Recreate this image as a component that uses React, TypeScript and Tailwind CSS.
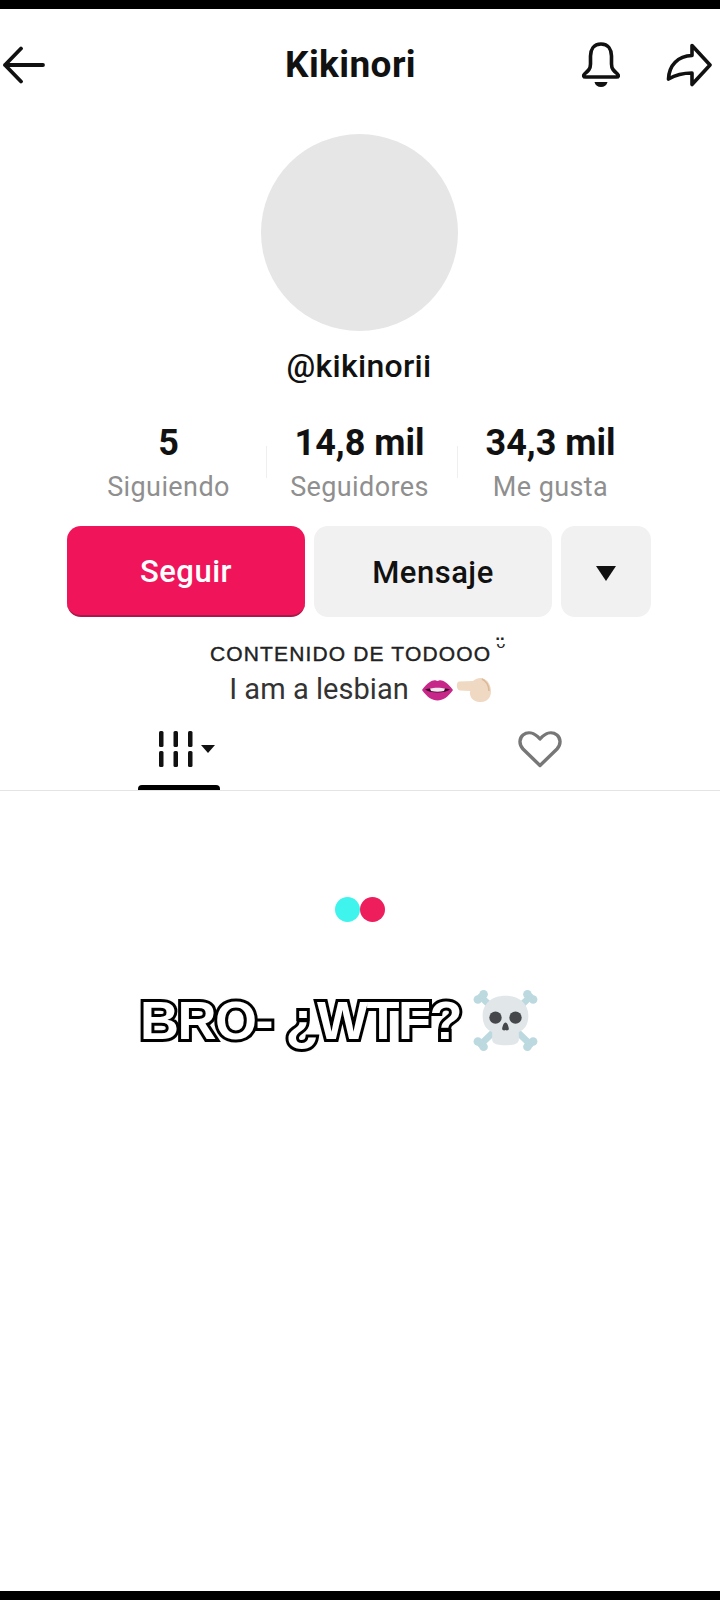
import { FC } from "react";

const font = { sans: "font-['Roboto',Arial,sans-serif]", wide: "font-['Liberation_Sans',Arial,sans-serif]" };

const stats = [
  { value: "5", label: "Siguiendo" },
  { value: "14,8 mil", label: "Seguidores" },
  { value: "34,3 mil", label: "Me gusta" },
];

const BackIcon: FC = () => (
  <svg width="44" height="38" viewBox="0 0 44 38" fill="none" stroke="#111" strokeWidth="3.8" strokeLinecap="round" strokeLinejoin="round">
    <path d="M41 19H3M19 2.500 3 19l16 16.500" />
  </svg>
);

const BellIcon: FC = () => (
  <svg width="42" height="46" viewBox="0 0 42 46" fill="none" stroke="#111" strokeWidth="3.6" strokeLinejoin="round">
    <path d="M21 2c-7.500 0-10.500 6-10.500 12v8c0 5-2.500 7-6 10-1.500 1.500-1 3 1 3h31c2 0 2.500-1.500 1-3-3.500-3-6-5-6-10v-8C31.500 8 28.500 2 21 2Z" />
    <path d="M14.500 40h13c-.8 3.500-3.200 5-6.500 5s-5.700-1.500-6.500-5Z" fill="#111" stroke="none" />
  </svg>
);

const ShareIcon: FC = () => (
  <svg width="46" height="44" viewBox="0 0 46 44" fill="none" stroke="#111" strokeWidth="3.6" strokeLinejoin="round" strokeLinecap="round">
    <path d="M26 2.500 44 22 26 41.500V30c-8 0-15 1-23.500 6C3 22 12 13 26 12.500V2.500Z" />
  </svg>
);

const Lips: FC = () => (
  <svg width="33" height="22" viewBox="0 0 33 22">
    <path d="M1 11C7 3 12 .5 15 1.500c1 .6 2 .6 3 0 3-1 8 1.500 14 9.500-5 7-10 10.500-15.500 10.500S6 18 1 11Z" fill="#c8278a" />
    <path d="M4 10.500c6-2 19-2 25 0-5 4-20 4-25 0Z" fill="#3d0a2a" />
    <path d="M9 9.500c4-1 11-1 15 0l-1 2.500c-4 1-9 1-13 0Z" fill="#f6e8f0" />
  </svg>
);

const PointingHand: FC = () => (
  <svg width="36" height="26" viewBox="0 0 36 26">
    <path d="M3 4.500 17 4C20 1.500 24 .5 27 1.500c5 1.500 8 6.500 8 13 0 6-4 10.500-10 10.500-5 0-9-2-10.500-6-.8-2-.8-3.500-.2-5L4 13.500C0 13 0 5 3 4.500Z" fill="#efd9c2" />
    <path d="M26 2c4 2 7 6 7 12" fill="none" stroke="#dcb998" strokeWidth="1.500" />
  </svg>
);

const Skull: FC = () => (
  <svg width="65" height="61" viewBox="0 0 68 64">
    <g stroke="#bcd9e0" strokeWidth="7" strokeLinecap="round">
      <path d="M8 7 60 57M60 7 8 57" />
    </g>
    <g fill="#bcd9e0">
      <circle cx="5" cy="10" r="4.500" /><circle cx="11" cy="4.500" r="4.500" />
      <circle cx="63" cy="10" r="4.500" /><circle cx="57" cy="4.500" r="4.500" />
      <circle cx="5" cy="54" r="4.500" /><circle cx="11" cy="59.500" r="4.500" />
      <circle cx="63" cy="54" r="4.500" /><circle cx="57" cy="59.500" r="4.500" />
    </g>
    <path d="M34 6c15 0 24 9 24 21 0 9-4 15-10 17v8c0 4-4 6-14 6s-14-2-14-6v-8c-6-2-10-8-10-17C10 15 19 6 34 6Z" fill="#e1e6e9" />
    <circle cx="23.500" cy="29" r="6.500" fill="#45474b" />
    <circle cx="44.500" cy="29" r="6.500" fill="#45474b" />
    <path d="M34 34c-2 0-3.500 5-3.500 7 0 1.500 2.500 2 3.500 1 1 1 3.500.5 3.500-1 0-2-1.500-7-3.500-7Z" fill="#45474b" />
  </svg>
);

export default function App() {
  return (
    <div className={`${font.sans} flex h-[1600px] w-[720px] flex-col bg-white text-[#111]`}>
      <div className="h-[9px] bg-black" />

      <div className="flex flex-1 flex-col">
        <div className="flex h-[112px] items-center">
          <div className="w-[285px] pl-[2px]">
            <BackIcon />
          </div>
          <h1 className="w-[295px] text-[37px] font-bold tracking-[0.4px]">Kikinori</h1>
          <BellIcon />
          <div className="ml-[44px]">
            <ShareIcon />
          </div>
        </div>

        <div className="mt-[13px] ml-[261px] h-[197px] w-[197px] rounded-full bg-[#e6e6e6]" />

        <p className="mt-[15px] ml-[-2px] text-center text-[32px] leading-[40px] font-medium tracking-[0.3px]">@kikinorii</p>

        <div className="mt-[38px] flex items-center justify-center pl-[3px]">
          {stats.map((s, i) => (
            <div key={s.label} className="flex items-center">
              {i > 0 && <div className="mb-[4px] h-[32px] w-px bg-[#efefef]" />}
              <div className="w-[190px] text-center last:pr-[4px]">
                <div className="text-[36px] leading-[38px] font-bold">{s.value}</div>
                <div className="mt-[9px] text-[27px] leading-[32px] tracking-[0.4px] text-[#8f8f8f]">{s.label}</div>
              </div>
            </div>
          ))}
        </div>

        <div className="mt-[23px] ml-[67px] flex h-[91px] items-stretch gap-[9px] text-[31px] font-medium tracking-[0.5px]">
          <button className="w-[238px] rounded-[14px] border-b-2 border-[#a8184a] bg-[#f0145a] pt-[3px] text-white">Seguir</button>
          <button className="w-[238px] rounded-[14px] bg-[#f1f1f1] pt-[3px]">Mensaje</button>
          <button className="flex w-[90px] items-center justify-center rounded-[14px] bg-[#f1f1f1] pt-[3px]">
            <svg width="22" height="17" viewBox="0 0 22 17">
              <path d="M1 1h20L11 16Z" fill="#111" />
            </svg>
          </button>
        </div>

        <div className="mt-[24px] flex items-start justify-center pr-[4px]">
          <p className={`${font.wide} text-[21px] leading-[26px] font-medium tracking-[1.15px] text-[#222] [-webkit-text-stroke:0.4px_#222]`}>CONTENIDO DE TODOOO</p>
          <span className="ml-[5px] font-['DejaVu_Sans',sans-serif] text-[24px] leading-[14px] text-[#222]">ᵕ̈</span>
        </div>

        <div className="mt-[5px] flex h-[36px] items-center justify-center pl-[1px]">
          <span className="text-[29px] tracking-[0.05px] text-[#333]">I am a lesbian</span>
          <span className="ml-[12px]"><Lips /></span>
          <span className="ml-[2px]"><PointingHand /></span>
        </div>

        <div className="mt-[17px] flex h-[66px] border-b border-[#e4e4e4]">
          <div className="ml-[138px] flex w-[82px] flex-col items-center">
            <div className="flex h-[60px] items-start pl-[15px] pt-[5px]">
              <svg width="58" height="38" viewBox="0 0 58 38" fill="#111">
                <rect x="1" y="1" width="4.500" height="16" rx="1.500" />
                <rect x="15.500" y="1" width="4.500" height="16" rx="1.500" />
                <rect x="30" y="1" width="4.500" height="16" rx="1.500" />
                <rect x="1" y="21" width="4.500" height="16" rx="1.500" />
                <rect x="15.500" y="21" width="4.500" height="16" rx="1.500" />
                <rect x="30" y="21" width="4.500" height="16" rx="1.500" />
                <path d="M43 15h14l-7 8Z" />
              </svg>
            </div>
            <div className="h-[5px] w-full rounded-t-[4px] bg-black" />
          </div>
          <div className="ml-[298px] pt-[5px]">
            <svg width="44" height="38" viewBox="0 0 44 38" fill="none" stroke="#777" strokeWidth="3.400" strokeLinejoin="round">
              <path d="M22 35.500 5 19C.5 14 1.500 8 5 5c4.500-3.500 11-3 17 4 6-7 12.500-7.500 17-4 3.500 3 4.500 9 0 14L22 35.500Z" />
            </svg>
          </div>
        </div>

        <div className="mt-[106px] flex justify-center pr-[1px]">
          <div className="h-[25px] w-[25px] rounded-full bg-[#3ef4ec]" />
          <div className="h-[25px] w-[25px] rounded-full bg-[#ee1d5c]" />
        </div>

        <div className="mt-[65px] ml-[140px] flex items-center">
          <span className={`${font.wide} text-[54px] leading-[66px] font-bold tracking-[-1.500px] text-white [-webkit-text-stroke:6px_#000] [paint-order:stroke_fill] [text-shadow:0_0_4px_#0006]`}>
            BRO- ¿WTF?
          </span>
          <span className="ml-[12px]"><Skull /></span>
        </div>
      </div>

      <div className="h-[9px] bg-black" />
    </div>
  );
}
